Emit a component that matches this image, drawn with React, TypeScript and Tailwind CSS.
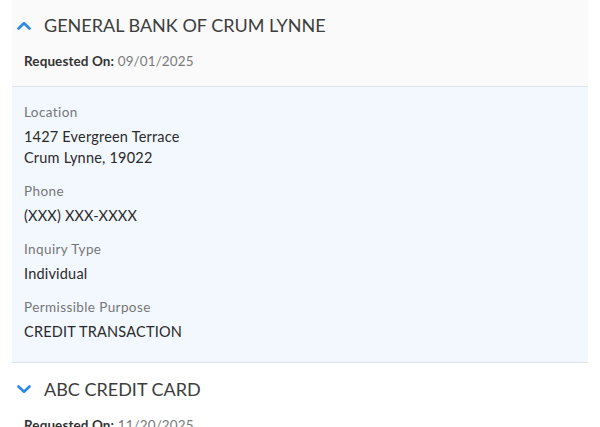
import React from "react";

const ChevronUp = () => (
  <svg width="14" height="9" viewBox="0 0 14 9" fill="none">
    <path d="M1.5 7.5L7 2.2L12.5 7.5" stroke="#2b89e4" strokeWidth="2.6" strokeLinecap="round" strokeLinejoin="round" />
  </svg>
);

const ChevronDown = () => (
  <svg width="14" height="9" viewBox="0 0 14 9" fill="none">
    <path d="M1.5 1.5L7 6.8L12.5 1.5" stroke="#2b89e4" strokeWidth="2.6" strokeLinecap="round" strokeLinejoin="round" />
  </svg>
);

interface Field {
  label: string;
  lines: string[];
}

const fields: Field[] = [
  { label: "Location", lines: ["1427 Evergreen Terrace", "Crum Lynne, 19022"] },
  { label: "Phone", lines: ["(XXX) XXX-XXXX"] },
  { label: "Inquiry Type", lines: ["Individual"] },
  { label: "Permissible Purpose", lines: ["CREDIT TRANSACTION"] },
];

const Header = ({ title, date, open }: { title: string; date: string; open: boolean }) => (
  <div className={`${open ? "bg-[#fafafa] border-b border-[#dfe4ea] pt-[14px]" : "bg-white pt-[15px]"} pb-[15px]`}>
    <div className="flex items-center h-[22px]">
      <div className="w-[32px] flex pl-[5px]">{open ? <ChevronUp /> : <ChevronDown />}</div>
      <h2 className="text-[18px] leading-[22px] text-[#3d3d3d]">{title}</h2>
    </div>
    <p className="mt-[15px] pl-[12px] text-[13.5px] leading-[20px] text-[#7a7a7a] tracking-[0.1px]">
      <span className="font-bold text-[#333]">Requested On:</span> {date}
    </p>
  </div>
);

export default function App() {
  return (
    <div className="w-[600px] h-[427px] overflow-hidden bg-white px-[12px]" style={{ fontFamily: "Lato, 'Noto Sans', sans-serif" }}>
      <Header title="GENERAL BANK OF CRUM LYNNE" date="09/01/2025" open />
      <div className="bg-[#f3f8fe] border-b border-[#dde3ea] pl-[12px] pt-[15px] pb-[20px] flex flex-col gap-[13px]">
        {fields.map((f) => (
          <div key={f.label}>
            <p className="text-[13.5px] leading-[20px] text-[#767676] tracking-[0.4px]">{f.label}</p>
            <div className="mt-[4px] text-[14.5px] leading-[21px] text-[#2a2a2a] tracking-[0.2px]">
              {f.lines.map((l) => (
                <p key={l}>{l}</p>
              ))}
            </div>
          </div>
        ))}
      </div>
      <Header title="ABC CREDIT CARD" date="11/20/2025" open={false} />
    </div>
  );
}
